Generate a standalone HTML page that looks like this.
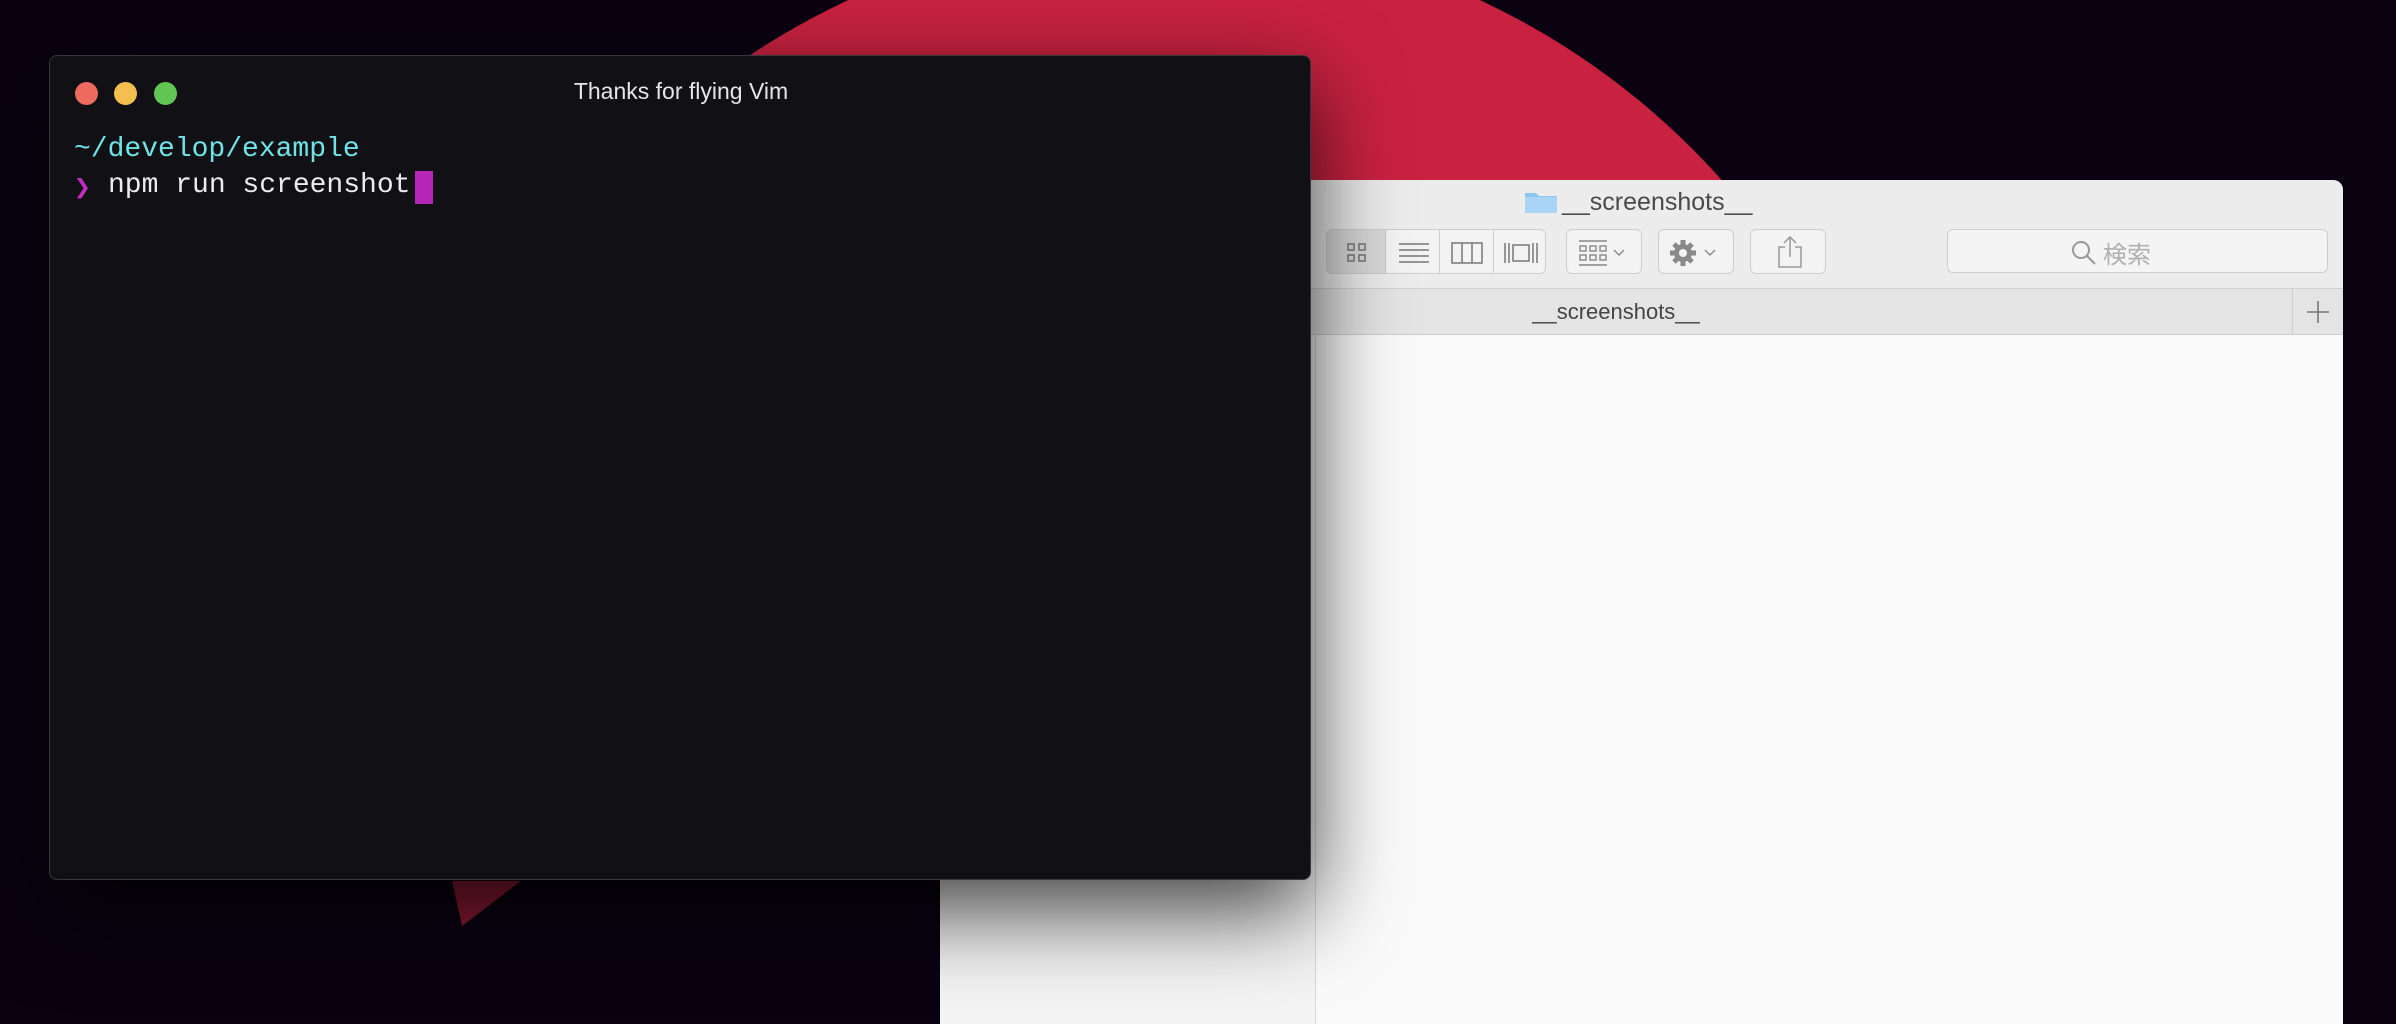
<!DOCTYPE html>
<html><head><meta charset="utf-8"><style>
*{margin:0;padding:0;box-sizing:border-box}
html,body{width:2396px;height:1024px;overflow:hidden;background:#0a0211;font-family:"Liberation Sans","Noto Sans CJK JP",sans-serif}
#wrap{position:relative;width:2396px;height:1024px;overflow:hidden}
.abs{position:absolute}
#finder{left:940px;top:180px;width:1403px;height:844px;background:#fafafa;border-radius:10px 10px 0 0;overflow:hidden}
#tb{left:0;top:0;width:100%;height:109px;background:#ececec;border-bottom:1px solid #d0d0d0}
#tabs{left:0;top:109px;width:100%;height:46px;background:#e4e4e4;border-bottom:1px solid #cfcfcf}
#side{left:0;top:155px;width:376px;height:689px;background:#f4f4f4;border-right:1px solid #d8d8d8}
.btn{position:absolute;top:49px;height:45px;border:1px solid #cdcdcd;border-radius:6px;background:#f3f3f3}
#term{left:49px;top:55px;width:1262px;height:825px;background:#111014;border:1px solid #38373c;border-radius:8px;box-shadow:0 30px 90px rgba(0,0,0,.75)}
.dot{position:absolute;top:26px;width:23px;height:23px;border-radius:50%}
.mono{font-family:"Liberation Mono","DejaVu Sans Mono",monospace;font-size:28px;position:absolute;white-space:pre}
</style></head><body><div id="wrap">
<svg class="abs" style="left:0;top:0;display:block" width="2396" height="1024">
<circle cx="1164" cy="677" r="747" fill="#c92240"/>
<rect x="0" y="880" width="940" height="144" fill="#0a0211"/>
<polygon points="452,881 521,881 462,926" fill="#8a1a32"/>
</svg>
<div id="finder" class="abs">
 <div id="tb" class="abs">
  <svg class="abs" style="left:584px;top:10px" width="34" height="24"><path d="M1 3h11l3 3h18v17H1z" fill="#8ec5ef"/><rect x="1" y="7" width="32" height="16" fill="#a9d4f5"/></svg>
  <div class="abs" style="left:622px;top:8px;font-size:25px;color:#4a4a4a">__screenshots__</div>
  <div class="btn" style="left:386px;width:220px;overflow:hidden">
   <div class="abs" style="left:0;top:0;width:59px;height:45px;background:#d9d9d9;border-right:1px solid #c8c8c8"></div>
   <div class="abs" style="left:112px;top:0;width:1px;height:45px;background:#cdcdcd"></div>
   <div class="abs" style="left:166px;top:0;width:1px;height:45px;background:#cdcdcd"></div>
   <svg class="abs" style="left:20px;top:13px" width="20" height="20" fill="none" stroke="#777" stroke-width="1.5"><rect x="1" y="1" width="6" height="6"/><rect x="12" y="1" width="6" height="6"/><rect x="1" y="12" width="6" height="6"/><rect x="12" y="12" width="6" height="6"/></svg>
   <svg class="abs" style="left:72px;top:12px" width="30" height="22" stroke="#777" stroke-width="1.5"><path d="M0 2h30M0 8h30M0 14h30M0 20h30"/></svg>
   <svg class="abs" style="left:124px;top:12px" width="32" height="22" fill="none" stroke="#777" stroke-width="1.5"><rect x="1" y="1" width="30" height="20"/><path d="M11 1v20M21 1v20"/></svg>
   <svg class="abs" style="left:176px;top:11px" width="36" height="24" fill="none" stroke="#777" stroke-width="1.5"><path d="M2 2v20M6 2v20M30 2v20M34 2v20"/><rect x="10" y="4" width="16" height="16"/></svg>
  </div>
  <div class="btn" style="left:626px;width:76px">
   <svg class="abs" style="left:12px;top:10px" width="50" height="26" fill="none" stroke="#888" stroke-width="1.4"><path d="M0 1h28M0 25h28"/><rect x="1" y="6" width="6" height="5"/><rect x="11" y="6" width="6" height="5"/><rect x="21" y="6" width="6" height="5"/><rect x="1" y="15" width="6" height="5"/><rect x="11" y="15" width="6" height="5"/><rect x="21" y="15" width="6" height="5"/><path d="M35 10l5 5 5-5"/></svg>
  </div>
  <div class="btn" style="left:718px;width:76px">
   <svg class="abs" style="left:10px;top:8px" width="56" height="30"><g fill="#8a8a8a"><circle cx="14" cy="15" r="9"/><g stroke="#8a8a8a" stroke-width="5"><path d="M14 2v26M1 15h26M5 6l18 18M23 6L5 24"/></g></g><circle cx="14" cy="15" r="4" fill="#f3f3f3"/><path d="M36 12l5 5 5-5" fill="none" stroke="#888" stroke-width="1.4"/></svg>
  </div>
  <div class="btn" style="left:810px;width:76px">
   <svg class="abs" style="left:26px;top:6px" width="26" height="32" fill="none" stroke="#999" stroke-width="1.5"><path d="M8 11H2v20h22V11h-6M13 1v20M7 7l6-6 6 6"/></svg>
  </div>
  <div class="btn" style="left:1007px;width:381px;height:44px;background:#f4f4f4">
   <svg class="abs" style="left:123px;top:10px" width="26" height="26" fill="none" stroke="#999" stroke-width="2"><circle cx="10" cy="10" r="8"/><path d="M16 16l8 8"/></svg>
   <div class="abs" style="left:155px;top:5px;font-size:24px;color:#b0b0b0">検索</div>
  </div>
 </div>
 <div id="tabs" class="abs">
  <div class="abs" style="left:0;width:1352px;top:10px;text-align:center;font-size:22px;color:#444">__screenshots__</div>
  <div class="abs" style="left:1352px;top:0;width:1px;height:46px;background:#cdcdcd"></div>
  <svg class="abs" style="left:1367px;top:12px" width="22" height="22" stroke="#777" stroke-width="1.6"><path d="M11 0v22M0 11h22"/></svg>
 </div>
 <div id="side" class="abs"></div>
</div>
<div id="term" class="abs">
 <div class="dot" style="left:25px;background:#ed6a5e"></div>
 <div class="dot" style="left:64px;background:#f5bf4f"></div>
 <div class="dot" style="left:104px;background:#61c554"></div>
 <div class="abs" style="left:0;width:1262px;top:22px;text-align:center;color:#e6e6e6;font-size:23px">Thanks for flying Vim</div>
 <div class="mono" style="left:24px;top:78px;color:#6fe3e6">~/develop/example</div>
 <div class="mono" style="left:24px;top:114px;color:#c02dc0">❯</div>
 <div class="mono" style="left:58px;top:114px;color:#ececec">npm run screenshot</div>
 <div class="abs" style="left:365px;top:115px;width:18px;height:33px;background:#b526b8"></div>
</div>
</div></body></html>
